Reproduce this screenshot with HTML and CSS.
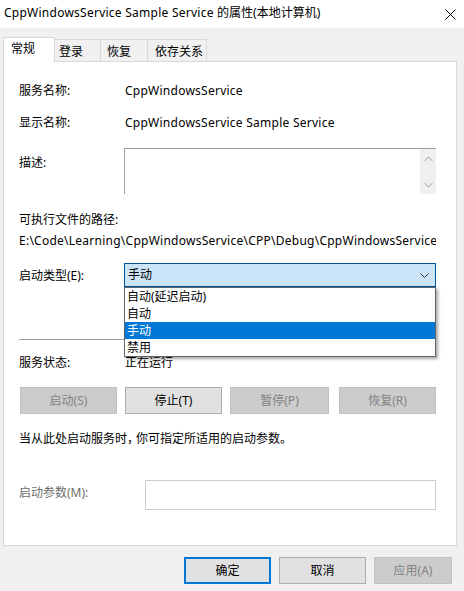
FILE: index.html
```html
<!DOCTYPE html>
<html lang="zh-CN">
<head>
<meta charset="utf-8">
<title>属性</title>
<link rel="stylesheet" href="styles.css">
</head>
<body>
<div class="titlebar">
  <span class="title"><span class="en">CppWindowsService Sample Service </span>的属性(本地计算机)</span>
  <svg class="close" width="11" height="11" viewBox="0 0 11 11"><path d="M0.5 0.5 L10.5 10.5 M10.5 0.5 L0.5 10.5" stroke="#000" stroke-width="1" fill="none"/></svg>
</div>
<div class="tabs">
  <div class="tab active">常规</div>
  <div class="tab t2">登录</div>
  <div class="tab t3">恢复</div>
  <div class="tab t4">依存关系</div>
</div>
<div class="panel">
  <div class="row r-name"><span class="lbl">服务名称:</span><span class="val en">CppWindowsService</span></div>
  <div class="row r-disp"><span class="lbl">显示名称:</span><span class="val en">CppWindowsService Sample Service</span></div>
  <div class="row r-desc">
    <span class="lbl lbl-desc">描述:</span>
    <div class="desc-box">
      <div class="desc-text"></div>
      <div class="vscroll">
        <svg width="9" height="6" viewBox="0 0 9 6"><path d="M0.5 5 L4.5 1 L8.5 5" stroke="#c2c2c2" stroke-width="1.3" fill="none"/></svg>
        <svg width="9" height="6" viewBox="0 0 9 6"><path d="M0.5 1 L4.5 5 L8.5 1" stroke="#c2c2c2" stroke-width="1.3" fill="none"/></svg>
      </div>
    </div>
  </div>
  <div class="path-lbl">可执行文件的路径:</div>
  <div class="path en">E:\Code\Learning\CppWindowsService\CPP\Debug\CppWindowsService</div>
  <div class="row r-type">
    <span class="lbl lbl-type">启动类型(E):</span>
    <div class="combo-wrap">
      <div class="combo">
        <span>手动</span>
        <svg width="9" height="5" viewBox="0 0 9 5"><path d="M0.5 0.5 L4.5 4.5 L8.5 0.5" stroke="#333" stroke-width="1" fill="none"/></svg>
      </div>
      <ul class="dropdown">
        <li>自动(延迟启动)</li>
        <li>自动</li>
        <li class="sel">手动</li>
        <li>禁用</li>
      </ul>
    </div>
  </div>
  <div class="sep"></div>
  <div class="row r-status"><span class="lbl">服务状态:</span><span class="val">正在运行</span></div>
  <div class="btnrow">
    <button class="btn dis b1">启动(S)</button>
    <button class="btn b2">停止(T)</button>
    <button class="btn dis b3">暂停(P)</button>
    <button class="btn dis b4">恢复(R)</button>
  </div>
  <div class="hint">当从此处启动服务时<span class="punct">，</span>你可指定所适用的启动参数<span class="punct">。</span></div>
  <div class="row r-param">
    <span class="lbl lbl-param">启动参数(M):</span>
    <div class="param-box"></div>
  </div>
</div>
<div class="footer">
  <button class="fbtn default">确定</button>
  <button class="fbtn">取消</button>
  <button class="fbtn fdis">应用(A)</button>
</div>
</body>
</html>
```
FILE: styles.css
```css
* { box-sizing: border-box; }
html, body { margin: 0; padding: 0; }
body {
  width: 464px;
  height: 591px;
  overflow: hidden;
  background: #f0f0f0;
  font-family: "Noto Sans", "Noto Sans CJK SC", sans-serif;
  font-size: 12px;
  line-height: 16px;
  color: #000;
}
.en { letter-spacing: 0.25px; }
.punct { letter-spacing: -3px; }
.titlebar {
  height: 28px;
  background: #fff;
  display: flex;
  align-items: center;
  justify-content: space-between;
  padding: 0 8px 2px 4px;
}
.title { white-space: nowrap; }
.close { display: block; margin-top: 2px; }

.tabs {
  display: flex;
  align-items: flex-end;
  margin: 9px 0 0 3px;
  height: 24px;
}
.tab {
  height: 22px;
  background: #f0f0f0;
  border: 1px solid #d9d9d9;
  border-left: none;
  border-bottom: none;
  padding: 4px 0 0 5px;
  line-height: 16px;
}
.tab.active {
  width: 52px;
  height: 25px;
  margin-bottom: -1px;
  background: #fff;
  border-left: 1px solid #d9d9d9;
  padding: 3px 0 0 7px;
  position: relative;
  z-index: 1;
}
.tab.t2 { width: 46px; padding-left: 4px; }
.tab.t3 { width: 47px; padding-left: 6px; }
.tab.t4 { width: 59px; padding-left: 7px; }

.panel {
  margin-left: 3px;
  width: 454px;
  height: 485px;
  background: #fff;
  border: 1px solid #d9d9d9;
  padding: 21px 0 0 15px;
}
.row { display: flex; align-items: flex-start; }
.lbl { width: 106px; flex: none; white-space: nowrap; }
.val { white-space: nowrap; }
.r-disp { margin-top: 16px; }
.r-desc { margin-top: 17px; }
.lbl-desc { width: 105px; margin-top: 7px; }
.desc-box {
  width: 312px;
  height: 46px;
  border-top: 1px solid #a0a0a0;
  border-left: 1px solid #a0a0a0;
  display: flex;
}
.desc-text { flex: 1; }
.vscroll {
  width: 16px;
  background: #f0f0f0;
  display: flex;
  flex-direction: column;
  justify-content: space-between;
  align-items: center;
  padding: 7px 0 6px 0;
}
.vscroll svg { display: block; }
.path-lbl { margin-top: 18px; }
.path {
  margin-top: 5px;
  width: 417px;
  white-space: nowrap;
  overflow: hidden;
}
.r-type { margin-top: 14px; }
.lbl-type { width: 105px; margin-top: 5px; }
.combo-wrap { position: relative; width: 312px; }
.combo {
  height: 24px;
  background: #cce4f7;
  border: 1px solid #005499;
  display: flex;
  align-items: center;
  justify-content: space-between;
  padding: 0 6px 0 3px;
}
.combo svg { display: block; margin-top: 1px; }
.dropdown {
  position: absolute;
  left: 0;
  top: 24px;
  width: 312px;
  margin: 0;
  padding: 0;
  list-style: none;
  background: #fff;
  border: 1px solid #646464;
  box-shadow: 2px 2px 3px rgba(0, 0, 0, 0.35);
  z-index: 5;
}
.dropdown li {
  height: 17px;
  line-height: 17px;
  padding-left: 2px;
}
.dropdown li.sel { background: #0078d7; color: #fff; }
.sep {
  margin-top: 52px;
  width: 417px;
  height: 1px;
  background: #a0a0a0;
}
.r-status { margin-top: 15px; }
.btnrow { display: flex; margin-top: 16px; }
.btn {
  font: inherit;
  height: 27px;
  width: 97px;
  padding: 0;
  background: #e1e1e1;
  border: 1px solid #adadad;
  color: #000;
}
.btn.dis { background: #cccccc; border-color: #bfbfbf; color: #838383; }
.b1 { margin-left: 1px; }
.b2 { margin-left: 8px; }
.b3 { margin-left: 8px; width: 99px; }
.b4 { margin-left: 10px; }
.hint { margin-top: 17px; }
.r-param { margin-top: 33px; }
.lbl-param { width: 126px; margin-top: 5px; color: #6d6d6d; }
.param-box {
  width: 291px;
  height: 30px;
  border: 1px solid #cccccc;
}
.footer {
  display: flex;
  margin-top: 11px;
  padding-left: 184px;
}
.fbtn {
  font: inherit;
  width: 87px;
  height: 27px;
  padding: 0;
  background: #e1e1e1;
  border: 1px solid #adadad;
  color: #000;
}
.fbtn + .fbtn { margin-left: 8px; }
.fbtn.default { border: 2px solid #0078d7; }
.fbtn.fdis { width: 78px; background: #cccccc; border-color: #bfbfbf; color: #838383; }
```
